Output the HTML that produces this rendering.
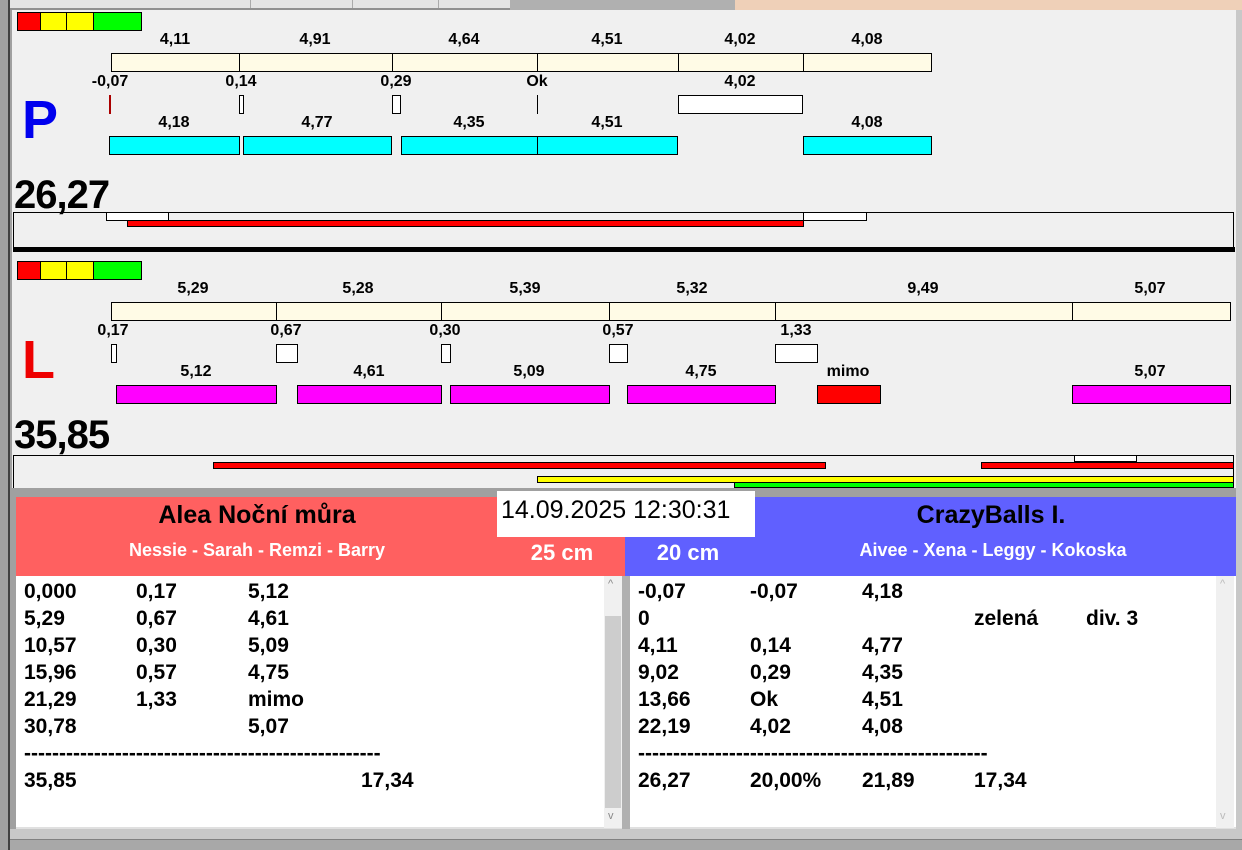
<!DOCTYPE html>
<html><head><meta charset="utf-8"><style>
*{margin:0;padding:0;box-sizing:border-box}
body{width:1242px;height:850px;background:#a0a0a0;position:relative;overflow:hidden;font-family:"Liberation Sans",Arial,sans-serif}
div{position:absolute}
.b{border:1px solid #000}
.t{font-weight:bold;font-size:16px;color:#000;transform:translateX(-50%);white-space:nowrap;line-height:16px}
.row{font-weight:bold;font-size:21px;line-height:27px;white-space:nowrap}
</style></head><body>
<div style="left:0;top:0;width:1242px;height:10px;background:#f0f0f0"></div>
<div style="left:0;top:0;width:735px;height:10px;background:#e4e4e4;border-bottom:2px solid #909090"></div>
<div style="left:250px;top:0;width:1px;height:8px;background:#aaa"></div>
<div style="left:352px;top:0;width:1px;height:8px;background:#aaa"></div>
<div style="left:438px;top:0;width:1px;height:8px;background:#aaa"></div>
<div style="left:510px;top:0;width:225px;height:10px;background:#b0b0b0"></div>
<div style="left:735px;top:0;width:507px;height:12px;background:#efd0b8"></div>
<div style="left:0;top:0;width:10px;height:850px;background:#a0a0a0;border-right:2px solid #404040"></div>
<div style="left:12px;top:10px;width:1225px;height:478px;background:#f0f0f0"></div>
<div style="left:1236px;top:10px;width:6px;height:840px;background:#c8c8c8"></div>

<div class="b" style="left:17px;top:12px;width:24px;height:19px;background:#f00"></div>
<div class="b" style="left:40px;top:12px;width:27px;height:19px;background:#ff0"></div>
<div class="b" style="left:66px;top:12px;width:28px;height:19px;background:#ff0"></div>
<div class="b" style="left:93px;top:12px;width:49px;height:19px;background:#0f0"></div>

<div class="t" style="left:175px;top:32px">4,11</div>
<div class="t" style="left:315px;top:32px">4,91</div>
<div class="t" style="left:464px;top:32px">4,64</div>
<div class="t" style="left:607px;top:32px">4,51</div>
<div class="t" style="left:740px;top:32px">4,02</div>
<div class="t" style="left:867px;top:32px">4,08</div>
<div class="b" style="left:111px;top:53px;width:129px;height:19px;background:#fffbe6"></div>
<div class="b" style="left:239px;top:53px;width:154px;height:19px;background:#fffbe6"></div>
<div class="b" style="left:392px;top:53px;width:146px;height:19px;background:#fffbe6"></div>
<div class="b" style="left:537px;top:53px;width:142px;height:19px;background:#fffbe6"></div>
<div class="b" style="left:678px;top:53px;width:126px;height:19px;background:#fffbe6"></div>
<div class="b" style="left:803px;top:53px;width:129px;height:19px;background:#fffbe6"></div>

<div class="t" style="left:110px;top:74px">-0,07</div>
<div class="t" style="left:241px;top:74px">0,14</div>
<div class="t" style="left:396px;top:74px">0,29</div>
<div class="t" style="left:537px;top:74px">Ok</div>
<div class="t" style="left:740px;top:74px">4,02</div>
<div style="left:109px;top:95px;width:2px;height:19px;background:#a00"></div>
<div class="b" style="left:239px;top:95px;width:5px;height:19px;background:#fff"></div>
<div class="b" style="left:392px;top:95px;width:9px;height:19px;background:#fff"></div>
<div style="left:537px;top:95px;width:1px;height:19px;background:#000"></div>
<div class="b" style="left:678px;top:95px;width:125px;height:19px;background:#fff"></div>

<div style="left:22px;top:88px;font-size:54px;font-weight:bold;color:#0000ee;line-height:64px">P</div>

<div class="t" style="left:174px;top:115px">4,18</div>
<div class="t" style="left:317px;top:115px">4,77</div>
<div class="t" style="left:469px;top:115px">4,35</div>
<div class="t" style="left:607px;top:115px">4,51</div>
<div class="t" style="left:867px;top:115px">4,08</div>
<div class="b" style="left:109px;top:136px;width:131px;height:19px;background:#0ff"></div>
<div class="b" style="left:243px;top:136px;width:149px;height:19px;background:#0ff"></div>
<div class="b" style="left:401px;top:136px;width:137px;height:19px;background:#0ff"></div>
<div class="b" style="left:537px;top:136px;width:141px;height:19px;background:#0ff"></div>
<div class="b" style="left:803px;top:136px;width:129px;height:19px;background:#0ff"></div>

<div style="left:14px;top:172px;font-size:40px;font-weight:bold;line-height:46px;letter-spacing:-1px">26,27</div>
<div style="left:13px;top:212px;width:1221px;height:36px;border:1px solid #000;border-bottom:none"></div>
<div class="b" style="left:106px;top:212px;width:63px;height:9px;background:#fff"></div>
<div class="b" style="left:127px;top:220px;width:677px;height:7px;background:#f00"></div>
<div class="b" style="left:803px;top:212px;width:64px;height:9px;background:#fff"></div>
<div style="left:13px;top:247px;width:1222px;height:5px;background:#000"></div>

<div class="b" style="left:17px;top:261px;width:24px;height:19px;background:#f00"></div>
<div class="b" style="left:40px;top:261px;width:27px;height:19px;background:#ff0"></div>
<div class="b" style="left:66px;top:261px;width:28px;height:19px;background:#ff0"></div>
<div class="b" style="left:93px;top:261px;width:49px;height:19px;background:#0f0"></div>

<div class="t" style="left:193px;top:281px">5,29</div>
<div class="t" style="left:358px;top:281px">5,28</div>
<div class="t" style="left:525px;top:281px">5,39</div>
<div class="t" style="left:692px;top:281px">5,32</div>
<div class="t" style="left:923px;top:281px">9,49</div>
<div class="t" style="left:1150px;top:281px">5,07</div>
<div class="b" style="left:111px;top:302px;width:166px;height:19px;background:#fffbe6"></div>
<div class="b" style="left:276px;top:302px;width:166px;height:19px;background:#fffbe6"></div>
<div class="b" style="left:441px;top:302px;width:169px;height:19px;background:#fffbe6"></div>
<div class="b" style="left:609px;top:302px;width:167px;height:19px;background:#fffbe6"></div>
<div class="b" style="left:775px;top:302px;width:298px;height:19px;background:#fffbe6"></div>
<div class="b" style="left:1072px;top:302px;width:159px;height:19px;background:#fffbe6"></div>

<div class="t" style="left:113px;top:323px">0,17</div>
<div class="t" style="left:286px;top:323px">0,67</div>
<div class="t" style="left:445px;top:323px">0,30</div>
<div class="t" style="left:618px;top:323px">0,57</div>
<div class="t" style="left:796px;top:323px">1,33</div>
<div class="b" style="left:111px;top:344px;width:6px;height:19px;background:#fff"></div>
<div class="b" style="left:276px;top:344px;width:22px;height:19px;background:#fff"></div>
<div class="b" style="left:441px;top:344px;width:10px;height:19px;background:#fff"></div>
<div class="b" style="left:609px;top:344px;width:19px;height:19px;background:#fff"></div>
<div class="b" style="left:775px;top:344px;width:43px;height:19px;background:#fff"></div>

<div style="left:22px;top:331px;font-size:54px;font-weight:bold;color:#ee0000;line-height:58px">L</div>

<div class="t" style="left:196px;top:364px">5,12</div>
<div class="t" style="left:369px;top:364px">4,61</div>
<div class="t" style="left:529px;top:364px">5,09</div>
<div class="t" style="left:701px;top:364px">4,75</div>
<div class="t" style="left:848px;top:364px">mimo</div>
<div class="t" style="left:1150px;top:364px">5,07</div>
<div class="b" style="left:116px;top:385px;width:161px;height:19px;background:#f0f"></div>
<div class="b" style="left:297px;top:385px;width:145px;height:19px;background:#f0f"></div>
<div class="b" style="left:450px;top:385px;width:160px;height:19px;background:#f0f"></div>
<div class="b" style="left:627px;top:385px;width:149px;height:19px;background:#f0f"></div>
<div class="b" style="left:817px;top:385px;width:64px;height:19px;background:#f00"></div>
<div class="b" style="left:1072px;top:385px;width:159px;height:19px;background:#f0f"></div>

<div style="left:14px;top:412px;font-size:40px;font-weight:bold;line-height:46px;letter-spacing:-1px">35,85</div>
<div style="left:13px;top:455px;width:1221px;height:33px;border:1px solid #000;border-bottom:none"></div>
<div class="b" style="left:1074px;top:455px;width:63px;height:7px;background:#fff"></div>
<div class="b" style="left:213px;top:462px;width:613px;height:7px;background:#f00"></div>
<div class="b" style="left:981px;top:462px;width:253px;height:7px;background:#f00"></div>
<div class="b" style="left:537px;top:476px;width:697px;height:7px;background:#ff0"></div>
<div class="b" style="left:734px;top:482px;width:500px;height:6px;background:#0f0"></div>

<div style="left:16px;top:497px;width:610px;height:79px;background:#ff6060"></div>
<div style="left:625px;top:497px;width:611px;height:79px;background:#6060ff"></div>
<div style="left:497px;top:491px;width:258px;height:46px;background:#fff"></div>
<div style="left:501px;top:495px;font-size:25px;line-height:30px">14.09.2025 12:30:31</div>
<div class="t" style="left:257px;top:502px;font-size:25px;line-height:26px">Alea Noční můra</div>
<div class="t" style="left:257px;top:541px;font-size:18px;line-height:18px;color:#fff">Nessie - Sarah - Remzi - Barry</div>
<div class="t" style="left:562px;top:541px;font-size:22px;line-height:24px;color:#fff">25 cm</div>
<div class="t" style="left:688px;top:541px;font-size:22px;line-height:24px;color:#fff">20 cm</div>
<div class="t" style="left:991px;top:502px;font-size:25px;line-height:26px">CrazyBalls I.</div>
<div class="t" style="left:993px;top:541px;font-size:18px;line-height:18px;color:#fff">Aivee - Xena - Leggy - Kokoska</div>

<div style="left:16px;top:576px;width:606px;height:253px;background:#fff;border-bottom:2px solid #e0e0e0"></div>
<div style="left:604px;top:576px;width:18px;height:252px;background:#f0f0f0"></div>
<div style="left:605px;top:616px;width:16px;height:192px;background:#cdcdcd"></div>
<div style="left:608px;top:578px;font-size:11px;color:#888">^</div>
<div style="left:608px;top:810px;font-size:11px;color:#888">v</div>
<div style="left:622px;top:576px;width:8px;height:253px;background:#b0b0b0"></div>
<div style="left:630px;top:576px;width:606px;height:253px;background:#fff;border-bottom:2px solid #e0e0e0"></div>
<div style="left:1216px;top:576px;width:18px;height:252px;background:#f0f0f0"></div>
<div style="left:1220px;top:578px;font-size:11px;color:#bbb">^</div>
<div style="left:1220px;top:810px;font-size:11px;color:#bbb">v</div>

<div class="row" style="left:24px;top:578px">0,000<br>5,29<br>10,57<br>15,96<br>21,29<br>30,78</div>
<div class="row" style="left:136px;top:578px">0,17<br>0,67<br>0,30<br>0,57<br>1,33</div>
<div class="row" style="left:248px;top:578px">5,12<br>4,61<br>5,09<br>4,75<br>mimo<br>5,07</div>
<div class="row" style="left:24px;top:740px">---------------------------------------------------</div>
<div class="row" style="left:24px;top:767px">35,85</div>
<div class="row" style="left:361px;top:767px">17,34</div>

<div class="row" style="left:638px;top:578px">-0,07<br>0<br>4,11<br>9,02<br>13,66<br>22,19</div>
<div class="row" style="left:750px;top:578px">-0,07<br><br>0,14<br>0,29<br>Ok<br>4,02</div>
<div class="row" style="left:862px;top:578px">4,18<br><br>4,77<br>4,35<br>4,51<br>4,08</div>
<div class="row" style="left:974px;top:605px">zelená</div>
<div class="row" style="left:1086px;top:605px">div. 3</div>
<div class="row" style="left:638px;top:740px">--------------------------------------------------</div>
<div class="row" style="left:638px;top:767px">26,27</div>
<div class="row" style="left:750px;top:767px">20,00%</div>
<div class="row" style="left:862px;top:767px">21,89</div>
<div class="row" style="left:974px;top:767px">17,34</div>

<div style="left:10px;top:829px;width:1232px;height:10px;background:#c8c8c8"></div>
<div style="left:10px;top:839px;width:1232px;height:11px;background:#a8a8a8;border-top:1px solid #808080"></div>
</body></html>
